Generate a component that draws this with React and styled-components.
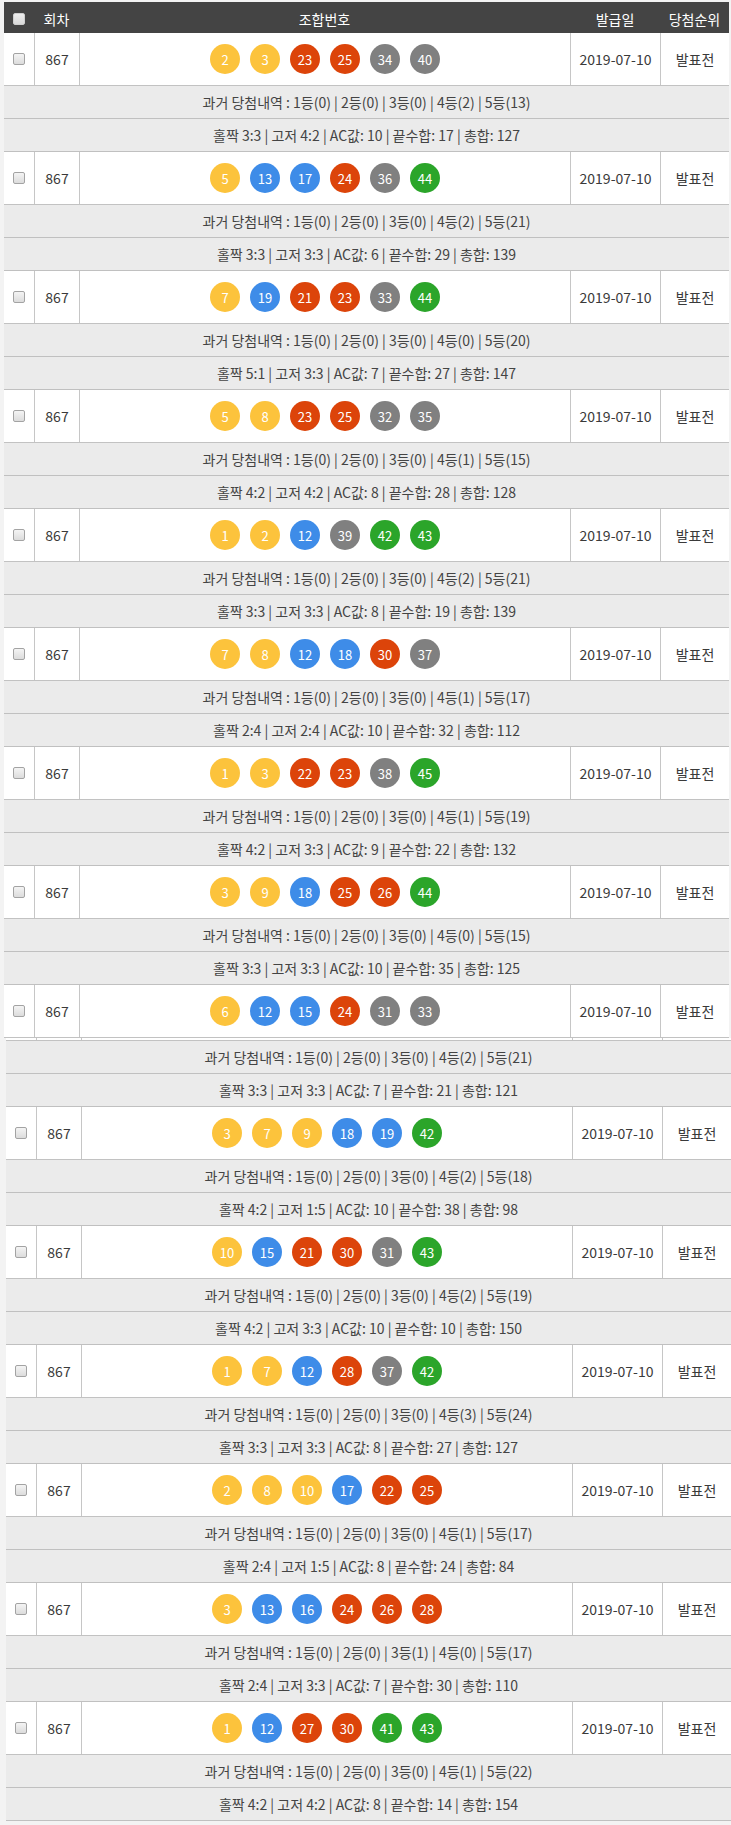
import React from 'react'
import styled, { createGlobalStyle } from 'styled-components'

const GlobalStyle = createGlobalStyle`
  html, body {
    margin: 0;
    padding: 0;
    background: #f3f3f3;
  }
  body {
    font-family: "Noto Sans CJK KR", "Noto Sans", sans-serif;
    color: #333;
  }
`

const rows = [
  { nums: [2, 3, 23, 25, 34, 40], hist: [0, 0, 0, 2, 13], oe: '3:3', hl: '4:2', ac: 10, ends: 17, sum: 127 },
  { nums: [5, 13, 17, 24, 36, 44], hist: [0, 0, 0, 2, 21], oe: '3:3', hl: '3:3', ac: 6, ends: 29, sum: 139 },
  { nums: [7, 19, 21, 23, 33, 44], hist: [0, 0, 0, 0, 20], oe: '5:1', hl: '3:3', ac: 7, ends: 27, sum: 147 },
  { nums: [5, 8, 23, 25, 32, 35], hist: [0, 0, 0, 1, 15], oe: '4:2', hl: '4:2', ac: 8, ends: 28, sum: 128 },
  { nums: [1, 2, 12, 39, 42, 43], hist: [0, 0, 0, 2, 21], oe: '3:3', hl: '3:3', ac: 8, ends: 19, sum: 139 },
  { nums: [7, 8, 12, 18, 30, 37], hist: [0, 0, 0, 1, 17], oe: '2:4', hl: '2:4', ac: 10, ends: 32, sum: 112 },
  { nums: [1, 3, 22, 23, 38, 45], hist: [0, 0, 0, 1, 19], oe: '4:2', hl: '3:3', ac: 9, ends: 22, sum: 132 },
  { nums: [3, 9, 18, 25, 26, 44], hist: [0, 0, 0, 0, 15], oe: '3:3', hl: '3:3', ac: 10, ends: 35, sum: 125 },
  { nums: [6, 12, 15, 24, 31, 33], hist: [0, 0, 0, 2, 21], oe: '3:3', hl: '3:3', ac: 7, ends: 21, sum: 121 },
  { nums: [3, 7, 9, 18, 19, 42], hist: [0, 0, 0, 2, 18], oe: '4:2', hl: '1:5', ac: 10, ends: 38, sum: 98 },
  { nums: [10, 15, 21, 30, 31, 43], hist: [0, 0, 0, 2, 19], oe: '4:2', hl: '3:3', ac: 10, ends: 10, sum: 150 },
  { nums: [1, 7, 12, 28, 37, 42], hist: [0, 0, 0, 3, 24], oe: '3:3', hl: '3:3', ac: 8, ends: 27, sum: 127 },
  { nums: [2, 8, 10, 17, 22, 25], hist: [0, 0, 0, 1, 17], oe: '2:4', hl: '1:5', ac: 8, ends: 24, sum: 84 },
  { nums: [3, 13, 16, 24, 26, 28], hist: [0, 0, 1, 0, 17], oe: '2:4', hl: '3:3', ac: 7, ends: 30, sum: 110 },
  { nums: [1, 12, 27, 30, 41, 43], hist: [0, 0, 0, 1, 22], oe: '4:2', hl: '4:2', ac: 8, ends: 14, sum: 154 },
]

const ballColor = n => {
  if (n <= 10) return '#fcc33c'
  if (n <= 20) return '#3e8ce8'
  if (n <= 30) return '#dc440a'
  if (n <= 40) return '#808080'
  return '#2ba52a'
}

const COLS = '30px 45px 1fr 90px 69px'

const Page = styled.div`
  padding-top: 2px;
`

// the list is cut in two blocks in the original, the second one sits 2px further right
const Block = styled.div`
  width: 725px;
  margin-left: ${p => p.$left}px;
`

const Header = styled.div`
  display: grid;
  grid-template-columns: ${COLS};
  height: 31px;
  background: #444;
  color: #fff;
  font-size: 14px;
`

const HeadCell = styled.div`
  display: flex;
  align-items: center;
  justify-content: center;
  padding-top: 2px;
`

const Check = styled.input.attrs({ type: 'checkbox' })`
  appearance: none;
  margin: 0;
  width: 12px;
  height: 12px;
  border-radius: 2px;
  border: 1px solid ${p => (p.$light ? '#cfcfcf' : '#a3a3a3')};
  background: ${p => (p.$light ? 'linear-gradient(#eeeeee, #d9d9d9)' : 'linear-gradient(#f4f4f4, #dcdcdc)')};
  box-sizing: border-box;
`

const MainRow = styled.div`
  display: grid;
  grid-template-columns: ${COLS};
  height: 53px;
  background: #fff;
  border-bottom: 1px solid #c2c2c2;
  box-sizing: border-box;
  font-size: 14px;
`

const Stub = styled.div`
  display: grid;
  grid-template-columns: ${COLS};
  height: 3px;
  background: #fff;
  border-bottom: 1px solid #c2c2c2;
  box-sizing: border-box;
`

const Cell = styled.div`
  display: flex;
  align-items: center;
  justify-content: center;
  border-left: ${p => (p.$first ? 'none' : '1px solid #c6c6c6')};
  color: #3a3a3a;
`

const Balls = styled.div`
  display: flex;
  gap: 10px;
`

const Ball = styled.span`
  width: 30px;
  height: 30px;
  border-radius: 50%;
  display: flex;
  align-items: center;
  justify-content: center;
  color: #fff;
  font-size: 13px;
  background: ${p => p.$bg};
`

const InfoRow = styled.div`
  height: 33px;
  padding-top: 1px;
  line-height: 31px;
  background: #ebebeb;
  border-bottom: 1px solid #c0c0c0;
  box-sizing: border-box;
  text-align: center;
  font-size: 14px;
  color: #444;
`

const Entry = ({ row, main = true }) => (
  <>
    {main && (
      <MainRow>
        <Cell $first><Check /></Cell>
        <Cell>867</Cell>
        <Cell>
          <Balls>
            {row.nums.map(n => (
              <Ball key={n} $bg={ballColor(n)}>{n}</Ball>
            ))}
          </Balls>
        </Cell>
        <Cell>2019-07-10</Cell>
        <Cell>발표전</Cell>
      </MainRow>
    )}
    {!main && (
      <Stub>
        <Cell $first /><Cell /><Cell /><Cell /><Cell />
      </Stub>
    )}
    <InfoRow>
      과거 당첨내역 : {row.hist.map((h, i) => `${i + 1}등(${h})`).join(' | ')}
    </InfoRow>
    <InfoRow>
      홀짝 {row.oe} | 고저 {row.hl} | AC값: {row.ac} | 끝수합: {row.ends} | 총합: {row.sum}
    </InfoRow>
  </>
)

export default function App() {
  const first = rows.slice(0, 8)
  const ninth = rows[8]
  const rest = rows.slice(9)
  return (
    <Page>
      <GlobalStyle />
      <Block $left={4}>
        <Header>
          <HeadCell><Check $light /></HeadCell>
          <HeadCell>회차</HeadCell>
          <HeadCell>조합번호</HeadCell>
          <HeadCell>발급일</HeadCell>
          <HeadCell>당첨순위</HeadCell>
        </Header>
        {first.map((r, i) => <Entry key={i} row={r} />)}
        <MainRow>
          <Cell $first><Check /></Cell>
          <Cell>867</Cell>
          <Cell>
            <Balls>
              {ninth.nums.map(n => (
                <Ball key={n} $bg={ballColor(n)}>{n}</Ball>
              ))}
            </Balls>
          </Cell>
          <Cell>2019-07-10</Cell>
          <Cell>발표전</Cell>
        </MainRow>
      </Block>
      <Block $left={6}>
        <Entry row={ninth} main={false} />
        {rest.map((r, i) => <Entry key={i} row={r} />)}
      </Block>
    </Page>
  )
}
